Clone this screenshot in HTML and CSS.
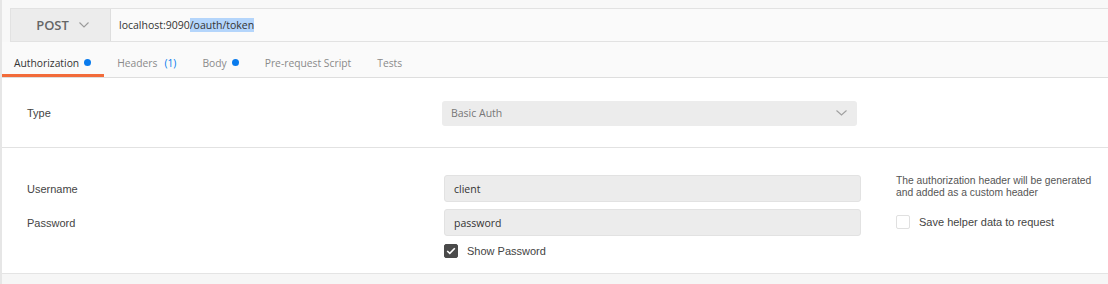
FILE: index.html
```html
<!DOCTYPE html>
<html lang="en">
<head>
    <meta charset="UTF-8">
    <title>Request - Authorization</title>
    <link rel="stylesheet" href="styles.css">
</head>
<body>
    <div class="app">
        <div class="url-bar">
            <div class="method">
                <span>POST</span>
                <svg class="chevron" width="10" height="6" viewBox="0 0 10 6"><path d="M0.5 0.5 L5 5 L9.5 0.5" fill="none" stroke="#9a9a9a" stroke-width="1.1"/></svg>
            </div>
            <div class="url">localhost:9090<span class="selected">/oauth/token</span></div>
        </div>

        <div class="tabs">
            <div class="tab active">Authorization <span class="dot"></span></div>
            <div class="tab">Headers <span class="count">(1)</span></div>
            <div class="tab">Body <span class="dot"></span></div>
            <div class="tab">Pre-request Script</div>
            <div class="tab">Tests</div>
        </div>

        <div class="content">
            <div class="type-row">
                <div class="label">Type</div>
                <div class="select">
                    <span>Basic Auth</span>
                    <svg class="chevron" width="11" height="6" viewBox="0 0 11 6"><path d="M0.5 0.5 L5.5 5 L10.5 0.5" fill="none" stroke="#a0a0a0" stroke-width="1.1"/></svg>
                </div>
            </div>

            <div class="cred-section">
                <div class="cred-fields">
                    <div class="field-row">
                        <div class="label">Username</div>
                        <div class="input">client</div>
                    </div>
                    <div class="field-row">
                        <div class="label">Password</div>
                        <div class="input">password</div>
                    </div>
                    <div class="field-row show-row">
                        <div class="label"></div>
                        <label class="check-line">
                            <span class="box checked">
                                <svg width="10" height="8" viewBox="0 0 10 8"><path d="M1.2 4 L3.8 6.4 L8.8 1.3" fill="none" stroke="#fff" stroke-width="1.6"/></svg>
                            </span>
                            Show Password
                        </label>
                    </div>
                </div>
                <div class="helper">
                    <p class="hint">The authorization header will be generated and added as a custom header</p>
                    <label class="check-line">
                        <span class="box"></span>
                        Save helper data to request
                    </label>
                </div>
            </div>
        </div>

        <div class="footer"></div>
    </div>
</body>
</html>
```

FILE: styles.css
```css
* {
    margin: 0;
    padding: 0;
    box-sizing: border-box;
}

body {
    font-family: 'Open Sans', sans-serif;
    background-color: #f8f8f8;
    width: 1108px;
    height: 284px;
    overflow: hidden;
}

.app {
    border-left: 2px solid #e6e6e6;
    height: 284px;
    display: flex;
    flex-direction: column;
}

.url-bar {
    display: flex;
    height: 34px;
    margin: 8px 0 0 8px;
    border: 1px solid #e2e2e2;
    border-right: none;
}

.method {
    width: 100px;
    background: #ececec;
    border-right: 1px solid #dedede;
    display: flex;
    align-items: center;
    justify-content: center;
    gap: 10px;
    font-size: 13px;
    font-weight: 600;
    color: #666;
    padding-left: 4px;
}

.url {
    flex: 1;
    background: #fafafa;
    display: flex;
    align-items: center;
    padding-left: 8px;
    font-size: 10.5px;
    color: #333;
}

.selected {
    background: #b4d5fb;
}

.tabs {
    display: flex;
    height: 36px;
    background: #fafafa;
    border-bottom: 1px solid #dedede;
}

.tab {
    display: flex;
    align-items: center;
    padding: 9px 13px 0;
    font-size: 10.3px;
    color: #8a8a8a;
    border-bottom: 3px solid transparent;
}

.tab.active {
    color: #333;
    border-bottom-color: #f26b3a;
    padding-left: 12px;
}

.dot {
    width: 7px;
    height: 7px;
    border-radius: 50%;
    background: #097bed;
    margin-left: 5px;
}

.count {
    color: #097bed;
    margin-left: 7px;
}

.content {
    background: #fff;
    flex: 1;
    border-bottom: 1px solid #e4e4e4;
}

.label {
    width: 440px;
    padding-left: 25px;
    font-family: 'Liberation Sans', Arial, sans-serif;
    font-size: 11px;
    color: #444;
}

.type-row {
    display: flex;
    align-items: center;
    height: 70px;
    padding-top: 1px;
    border-bottom: 1px solid #e2e2e2;
}

.select {
    width: 415px;
    height: 25px;
    background: #ececec;
    border-radius: 3px;
    display: flex;
    align-items: center;
    justify-content: space-between;
    padding: 0 10px 0 9px;
    font-size: 10.5px;
    color: #777;
}

.cred-section {
    display: flex;
    padding-top: 27px;
}

.cred-fields {
    display: flex;
    flex-direction: column;
    gap: 7px;
}

.field-row {
    display: flex;
    align-items: center;
}

.field-row .label {
    width: 442px;
}

.show-row {
    margin-top: 1px;
}

.input {
    width: 417px;
    height: 27px;
    background: #ececec;
    border: 1px solid #e2e2e2;
    border-radius: 3px;
    display: flex;
    align-items: center;
    padding-left: 9px;
    font-size: 10.5px;
    color: #333;
}

.check-line {
    display: flex;
    align-items: center;
    gap: 9px;
    font-family: 'Liberation Sans', Arial, sans-serif;
    font-size: 11px;
    color: #444;
}

.box {
    width: 14px;
    height: 14px;
    border: 1px solid #e0e0e0;
    border-radius: 2px;
    background: #fff;
    display: flex;
    align-items: center;
    justify-content: center;
}

.box.checked {
    background: #4a4a4a;
    border-color: #4a4a4a;
}

.helper {
    padding-left: 35px;
}

.hint {
    width: 200px;
    font-family: 'Liberation Sans', Arial, sans-serif;
    font-size: 10.3px;
    line-height: 12px;
    color: #555;
    margin-bottom: 16px;
}

.footer {
    height: 10px;
    background: #f6f6f6;
}
```
